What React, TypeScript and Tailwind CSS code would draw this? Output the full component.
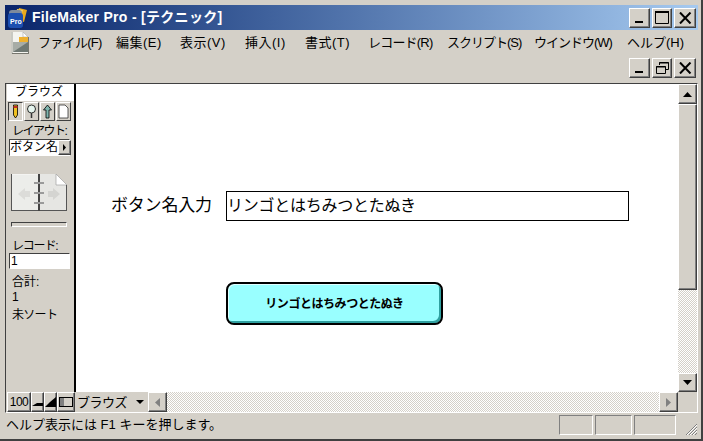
import type { ReactNode } from 'react';

const uiFont = "font-['Liberation_Sans','Noto_Sans_CJK_JP',sans-serif]";
const menus = [
  { label: 'ファイル(F)', cls: 'w-[78px] tracking-[-0.7px]' },
  { label: '編集(E)', cls: 'w-[64px] tracking-[0.5px]' },
  { label: '表示(V)', cls: 'w-[65px] tracking-[0.5px]' },
  { label: '挿入(I)', cls: 'w-[60px] tracking-[0.5px]' },
  { label: '書式(T)', cls: 'w-[63px] tracking-[0.5px]' },
  { label: 'レコード(R)', cls: 'w-[79px] tracking-[-0.8px]' },
  { label: 'スクリプト(S)', cls: 'w-[87px] tracking-[-1px]' },
  { label: 'ウインドウ(W)', cls: 'w-[93px] tracking-[-1px]' },
  { label: 'ヘルプ(H)', cls: 'w-[60px]' },
];

function Bevel({ className, children }: { className: string; children?: ReactNode }) {
  return (
    <div className={`flex items-center justify-center bg-[#d4d0c8] border border-t-white border-l-white border-r-[#404040] border-b-[#404040] shadow-[inset_-1px_-1px_0_#808080] ${className}`}>
      {children}
    </div>
  );
}

function Minimize() {
  return <svg width="12" height="12" viewBox="0 0 12 12"><rect x="1" y="9" width="8" height="2" fill="#000" /></svg>;
}
function Maximize() {
  return <svg width="14" height="13" viewBox="0 0 14 13"><path d="M0.5 1.5h13v11h-13zM0.5 1.5" fill="none" stroke="#000" /><rect x="0" y="0" width="14" height="2" fill="#000" /></svg>;
}
function Restore() {
  return <svg width="13" height="12" viewBox="0 0 13 12"><path d="M3.5 3V0.5h9v7H10M0.5 4.5h9v7h-9z" fill="none" stroke="#000" /><path d="M3 1h10M0 5h10" stroke="#000" /></svg>;
}
function Close() {
  return <svg width="13" height="12" viewBox="0 0 13 12"><path d="M1 0.5l10.5 11M11.5 0.5L1 11.5" stroke="#000" strokeWidth="2" fill="none" /></svg>;
}

function AppIcon() {
  return (
    <svg width="22" height="22" viewBox="0 0 22 22">
      <path d="M12 1l8 2-3 12-7-2z" fill="#e8a91c" />
      <path d="M10 2l6 1-3 10-5-1z" fill="#f5cf63" />
      <rect x="2" y="3" width="13" height="6" rx="3" fill="#7e8a9c" />
      <rect x="1" y="6" width="15" height="15" rx="3" fill="#1c4fb0" />
      <text x="3" y="17" fontSize="7" fontWeight="700" fill="#fff" fontFamily="Liberation Sans">Pro</text>
    </svg>
  );
}

function DocIcon() {
  return (
    <svg width="20" height="24" viewBox="0 0 20 24">
      <path d="M1 1h12l5 5v17H1z" fill="#f4f4f0" />
      <path d="M13 1l5 5h-5z" fill="#fff" stroke="#9a9a9a" strokeWidth="0.5" />
      <path d="M9 6h9v5H9z" fill="#eeb02e" />
      <path d="M3 11h15v10H3z" fill="#a7aca6" />
      <path d="M3 21l15-10v10z" fill="#6f7873" />
      <path d="M1 1v22h2V1z" fill="#c9c9c2" />
      <path d="M18 6h1v17H2v-1h16z" fill="#77776f" />
    </svg>
  );
}

function BookIcon() {
  return (
    <svg width="56" height="37" viewBox="0 0 56 37">
      <rect width="56" height="37" fill="#f4f4f2" />
      <path d="M1 1h26v35H1z" fill="#ecedea" />
      <path d="M28 0h17l11 11v26H28z" fill="#e6e6e3" />
      <path d="M45 0h11v11z" fill="#d4d0c8" />
      <path d="M45 0l11 11H45z" fill="#fff" stroke="#a0a0a0" strokeWidth="0.7" />
      <path d="M0 36h56v1H0zM0 0h1v37H0zM55 11h1v26h-1z" fill="#555" />
      <rect x="27" y="0" width="2" height="37" fill="#444" />
      <path d="M23 8h10v2H23zM23 18h10v2H23zM23 28h10v2H23z" fill="#9a9a9a" />
      <path d="M7 20l7-6v3h5v6h-5v3z" fill="#dcdcd9" />
      <path d="M49 20l-7-6v3h-5v6h5v3z" fill="#d4d4d1" />
    </svg>
  );
}

function Tool({ active, children }: { active?: boolean; children: ReactNode }) {
  return (
    <div className={`w-[15px] h-[19px] flex items-center justify-center border ${active ? 'border-t-[#404040] border-l-[#404040] border-r-white border-b-white' : 'border-t-white border-l-white border-r-[#404040] border-b-[#404040]'}`}>
      {children}
    </div>
  );
}

function LeftPanel() {
  return (
    <div className="w-[67px] shrink-0 flex flex-col bg-[#d4d0c8] text-[12px] leading-[15px] text-black">
      <div className="h-[17px] bg-white text-center leading-[17px] pr-[3px]">ブラウズ</div>
      <div className="flex mt-px pl-px gap-px">
        <Tool active>
          <svg width="7" height="15" viewBox="0 0 7 15"><path d="M1.500 1h4v10l-2 3-2-3z" fill="#f0c020" stroke="#000" strokeWidth="0.8" /><path d="M1.500 3h4" stroke="#c03020" strokeWidth="2" /></svg>
        </Tool>
        <Tool>
          <svg width="11" height="15" viewBox="0 0 11 15"><circle cx="5.500" cy="5" r="4" fill="#e6f5ee" stroke="#000" strokeWidth="0.8" /><path d="M5.500 9v5" stroke="#333" strokeWidth="1.500" /></svg>
        </Tool>
        <Tool>
          <svg width="11" height="15" viewBox="0 0 11 15"><path d="M5.500 1L9.500 6H7v8H4V6H1.500z" fill="#7fb5ae" stroke="#000" strokeWidth="0.8" /></svg>
        </Tool>
        <Tool>
          <svg width="11" height="15" viewBox="0 0 11 15"><path d="M1 1h6l3 3v10H1z" fill="#fff" stroke="#333" strokeWidth="0.8" /></svg>
        </Tool>
      </div>
      <div className="mt-[3px] pl-[5px] h-[15px] whitespace-nowrap tracking-[-1.500px]">レイアウト:</div>
      <div className="ml-[2px] w-[61px] h-[17px] flex bg-white border border-t-[#404040] border-l-[#404040] border-r-white border-b-white">
        <span className="flex-1 whitespace-nowrap leading-[15px]">ボタン名</span>
        <Bevel className="w-[13px] h-[15px] shrink-0">
          <svg width="5" height="7" viewBox="0 0 5 7"><path d="M1 0l3 3.500L1 7z" fill="#000" /></svg>
        </Bevel>
      </div>
      <div className="mt-[18px] ml-[4px]"><BookIcon /></div>
      <div className="mt-[11px] ml-[4px] w-[56px] h-[5px] bg-[#d4d0c8] border border-t-[#404040] border-l-[#404040] border-r-white border-b-white" />
      <div className="mt-[12px] pl-[5px] h-[14px] whitespace-nowrap tracking-[-1.200px]">レコード:</div>
      <div className="ml-[2px] w-[61px] h-[16px] bg-white border border-t-[#404040] border-l-[#404040] border-r-white border-b-white leading-[14px] pl-px">1</div>
      <div className="mt-[6px] pl-[5px] h-[15px]">合計:</div>
      <div className="pl-[5px] h-[15px]">1</div>
      <div className="mt-[3px] pl-[5px] h-[15px] whitespace-nowrap tracking-[-0.700px]">未ソート</div>
    </div>
  );
}

function Canvas() {
  return (
    <div className="flex-1 bg-white text-black pl-[35px] pt-[107px]">
      <div className="flex items-center h-[30px]">
        <span className="w-[115px] text-[17px] whitespace-nowrap tracking-[-0.2px]">ボタン名入力</span>
        <div className="w-[403px] h-[30px] border border-black text-[16px] leading-[28px] tracking-[-0.25px] whitespace-nowrap">リンゴとはちみつとたぬき</div>
      </div>
      <div className="mt-[61px] ml-[115px] w-[217px] h-[43px] rounded-[8px] border-2 border-black bg-[#99ffff] flex items-center justify-center text-[12px] font-bold tracking-[-0.45px] shadow-[inset_1px_1px_0_#e0ffff,inset_-2px_-2px_0_#2fa0a0]">
        リンゴとはちみつとたぬき
      </div>
    </div>
  );
}

function VScroll() {
  return (
    <div className="w-[19px] shrink-0 flex flex-col">
      <Bevel className="h-[20px] shrink-0">
        <svg width="9" height="5" viewBox="0 0 9 5"><path d="M4.500 0L9 5H0z" fill="#000" /></svg>
      </Bevel>
      <Bevel className="h-[186px] shrink-0" />
      <div className="flex-1 bg-[repeating-conic-gradient(#d4d0c8_0_25%,#fff_0_50%)] bg-[length:2px_2px]" />
      <Bevel className="h-[19px] shrink-0">
        <svg width="9" height="5" viewBox="0 0 9 5"><path d="M0 0h9L4.500 5z" fill="#000" /></svg>
      </Bevel>
    </div>
  );
}

function BottomBar() {
  return (
    <div className="h-[20px] flex pl-px text-[13px] leading-[17px] text-black">
      <Bevel className="w-[24px] shrink-0"><span className="text-[12px] tracking-[-0.5px]">100</span></Bevel>
      <Bevel className="w-[13px] shrink-0">
        <svg width="11" height="8" viewBox="0 0 11 8"><path d="M0 8l5-3h6v3z" fill="#000" /></svg>
      </Bevel>
      <Bevel className="w-[13px] shrink-0">
        <svg width="11" height="10" viewBox="0 0 11 10"><path d="M0 10l5-5 6-5v10z" fill="#000" /></svg>
      </Bevel>
      <Bevel className="w-[18px] shrink-0">
        <svg width="14" height="10" viewBox="0 0 14 10"><rect x="0.500" y="0.500" width="13" height="9" fill="none" stroke="#000" /><rect x="1" y="1" width="4" height="8" fill="#808080" /></svg>
      </Bevel>
      <div className="w-[72px] shrink-0 flex items-center pl-[2px]">
        <span className="flex-1 tracking-[-0.5px]">ブラウズ</span>
        <svg className="mr-[3px]" width="8" height="4" viewBox="0 0 8 4"><path d="M0 0h8L4 4z" fill="#000" /></svg>
      </div>
      <Bevel className="w-[19px] shrink-0 ml-px">
        <svg width="5" height="9" viewBox="0 0 5 9"><path d="M5 0v9L0 4.500z" fill="#808080" /></svg>
      </Bevel>
      <div className="flex-1 bg-[repeating-conic-gradient(#d4d0c8_0_25%,#fff_0_50%)] bg-[length:2px_2px]" />
      <Bevel className="w-[19px] shrink-0">
        <svg width="5" height="9" viewBox="0 0 5 9"><path d="M0 0v9l5-4.500z" fill="#808080" /></svg>
      </Bevel>
      <div className="w-[19px] shrink-0" />
    </div>
  );
}

function StatusBar() {
  const panels = ['w-[34px]', 'w-[37px]', 'w-[42px]'];
  return (
    <div className="h-[24px] flex items-center text-[13px] text-black">
      <span className="flex-1 pl-[1px] whitespace-nowrap">ヘルプ表示には F1 キーを押します。</span>
      <div className="flex gap-[2px] mr-[9px]">
        {panels.map((w) => (
          <div key={w} className={`${w} h-[20px] border border-t-[#808080] border-l-[#808080] border-r-white border-b-white`} />
        ))}
      </div>
      <svg className="mr-[1px] mt-[8px]" width="12" height="12" viewBox="0 0 12 12">
        <path d="M1 12L12 1M4 12l8-8M7 12l5-5M10 12l2-2" stroke="#808080" fill="none" />
        <path d="M2 12L12 2M5 12l7-7M8 12l4-4" stroke="#fff" fill="none" />
      </svg>
    </div>
  );
}

export default function App() {
  return (
    <div className={`w-[703px] h-[441px] overflow-hidden flex flex-col bg-[#d4d0c8] border-r-2 border-b-2 border-[#404040] pt-[5px] pl-[5px] pr-[3px] ${uiFont}`}>
      <div className="h-[25px] shrink-0 flex items-center bg-gradient-to-r from-[#0a246a] to-[#a6caf0]">
        <div className="ml-[2px]"><AppIcon /></div>
        <span className="ml-[3px] text-[14px] font-bold text-white tracking-[0.3px] whitespace-nowrap">FileMaker Pro - [テクニック]</span>
        <div className="ml-auto flex mr-[2px] gap-[2px]">
          <Bevel className="w-[21px] h-[20px]"><Minimize /></Bevel>
          <Bevel className="w-[20px] h-[20px]"><Maximize /></Bevel>
          <Bevel className="w-[22px] h-[20px]"><Close /></Bevel>
        </div>
      </div>

      <div className="h-[26px] shrink-0 flex items-center text-[13px] text-black">
        <div className="ml-[5px] mr-[8px] w-[20px]"><DocIcon /></div>
        <div className="flex whitespace-nowrap">
          {menus.map((m) => <span key={m.label} className={m.cls}>{m.label}</span>)}
        </div>
      </div>

      <div className="h-[27px] shrink-0 flex justify-end items-start pt-[2px] pr-[2px] gap-[2px]">
        <Bevel className="w-[21px] h-[20px]"><Minimize /></Bevel>
        <Bevel className="w-[20px] h-[20px]"><Restore /></Bevel>
        <Bevel className="w-[22px] h-[20px]"><Close /></Bevel>
      </div>

      <div className="h-[330px] shrink-0 flex flex-col border-t border-l border-[#404040] border-r border-r-white border-b border-b-white">
        <div className="flex-1 flex min-h-0">
          <div className="flex shrink-0 pl-px">
            <LeftPanel />
            <div className="w-[2px] bg-black" />
          </div>
          <Canvas />
          <VScroll />
        </div>
        <BottomBar />
      </div>

      <StatusBar />
    </div>
  );
}
